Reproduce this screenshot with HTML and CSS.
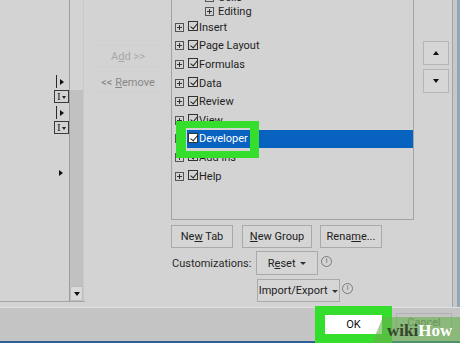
FILE: index.html
```html
<!DOCTYPE html>
<html lang="en">
<head>
    <meta charset="UTF-8">
    <meta name="viewport" content="width=device-width, initial-scale=1.0">
    <title>Customize the Ribbon</title>
    <link rel="stylesheet" href="styles.css">
</head>
<body>
    <div class="dialog">
        <div class="panes">
            <div class="cmd-list">
                <div class="cmd-tree">
                    <span class="tree-arrow lined"></span>
                    <span class="cmd-icon">I<i></i></span>
                    <span class="tree-arrow lined"></span>
                    <span class="cmd-icon">I<i></i></span>
                    <span class="tree-arrow lone"></span>
                </div>
                <div class="vscroll">
                    <div class="thumb"></div>
                    <div class="track"></div>
                    <div class="scroll-btn"><i class="tri-down"></i></div>
                </div>
            </div>

            <div class="add-remove">
                <button class="move-btn add">A<u>d</u>d &gt;&gt;</button>
                <button class="move-btn remove">&lt;&lt; <u>R</u>emove</button>
            </div>

            <div class="ribbon-col">
                <div class="tab-list">
                    <ul class="tabs">
                        <li class="row child short"><span class="plus"></span><span class="item">Cells</span></li>
                        <li class="row child short"><span class="plus"></span><span class="item">Editing</span></li>
                        <li class="row"><span class="plus"></span><span class="item"><span class="check"></span>Insert</span></li>
                        <li class="row"><span class="plus"></span><span class="item"><span class="check"></span>Page Layout</span></li>
                        <li class="row"><span class="plus"></span><span class="item"><span class="check"></span>Formulas</span></li>
                        <li class="row"><span class="plus"></span><span class="item"><span class="check"></span>Data</span></li>
                        <li class="row"><span class="plus"></span><span class="item"><span class="check"></span>Review</span></li>
                        <li class="row"><span class="plus"></span><span class="item"><span class="check"></span>View</span></li>
                        <li class="row selected"><span class="plus"></span><span class="item"><span class="check"></span>Developer</span></li>
                        <li class="row"><span class="plus"></span><span class="item"><span class="check"></span>Add-ins</span></li>
                        <li class="row"><span class="plus"></span><span class="item"><span class="check"></span>Help</span></li>
                    </ul>
                    <div class="callout dev-callout"></div>
                </div>

                <div class="tab-actions">
                    <button class="btn new-tab">Ne<u>w</u> Tab</button>
                    <button class="btn new-group"><u>N</u>ew Group</button>
                    <button class="btn rename">Rena<u>m</u>e...</button>
                </div>

                <div class="custom-row">
                    <span class="custom-label">Customizations:</span>
                    <button class="btn reset">R<u>e</u>set <i class="tri-down small"></i></button>
                    <span class="info">i</span>
                </div>

                <div class="import-row">
                    <button class="btn import">Import/Export <i class="tri-down small"></i></button>
                    <span class="info">i</span>
                </div>
            </div>

            <div class="move-col">
                <button class="arrow-btn"><i class="tri-up"></i></button>
                <button class="arrow-btn"><i class="tri-down"></i></button>
            </div>

            <div class="edge"></div>
        </div>

        <div class="footer">
            <button class="ok-btn">OK</button>
            <button class="cancel-btn">Cancel</button>
        </div>

        <div class="callout ok-callout"></div>
        <div class="watermark"><span class="wm-wiki">wiki</span><span class="wm-how">How</span></div>
    </div>
</body>
</html>
```

FILE: styles.css
```css
body {
    margin: 0;
    width: 460px;
    height: 343px;
    overflow: hidden;
    background-color: #d3d3d3;
    font-family: Roboto, "Noto Sans", sans-serif;
    font-size: 11px;
    color: #1f1f1f;
}

button {
    font-family: inherit;
    font-size: 11px;
    color: #222;
    padding: 0;
}

.dialog {
    position: relative;
    height: 343px;
    display: flex;
    flex-direction: column;
}

.panes {
    display: flex;
    height: 307px;
}

/* left command list */
.cmd-list {
    width: 85px;
    height: 302px;
    display: flex;
    border-bottom: 1px solid #a6a6a6;
    box-sizing: border-box;
}

.cmd-tree {
    width: 69px;
    display: flex;
    flex-direction: column;
    align-items: flex-start;
    padding-top: 75px;
    box-sizing: border-box;
}

.tree-arrow {
    position: relative;
}

.tree-arrow::after {
    content: "";
    position: absolute;
    border-left: 4px solid #111;
    border-top: 3px solid transparent;
    border-bottom: 3px solid transparent;
}

.tree-arrow.lined {
    margin-left: 56px;
    width: 8px;
    height: 13px;
    border-left: 1.5px solid #2a2a2a;
}

.tree-arrow.lined::after {
    left: 3px;
    top: 4px;
}

.tree-arrow.lone {
    margin: 33px 0 0 59px;
    height: 7px;
}

.tree-arrow.lone::after {
    left: 0;
    top: 0;
}

.cmd-icon {
    position: relative;
    margin: 2px 0 3px 54px;
    width: 15px;
    height: 13px;
    border: 1px solid #3a3a3a;
    border-left-width: 1.5px;
    box-sizing: border-box;
    font-family: "Liberation Serif", serif;
    font-size: 11px;
    line-height: 11px;
    padding-left: 2px;
}

.cmd-icon i {
    position: absolute;
    right: 2px;
    top: 5px;
    border-top: 3px solid #222;
    border-left: 2.5px solid transparent;
    border-right: 2.5px solid transparent;
}

.vscroll {
    width: 15px;
    display: flex;
    flex-direction: column;
    border-left: 1px solid #9d9d9d;
    border-right: 1px solid #c8c8c8;
    box-sizing: border-box;
}

.thumb {
    height: 90px;
    background-color: #d3d3d3;
}

.track {
    flex: 1;
    background-color: #c1c1c1;
}

.scroll-btn {
    height: 13px;
    background-color: #d9d9d9;
    border: 1px solid #bcbcbc;
    display: flex;
    align-items: center;
    justify-content: center;
}

.tri-down {
    border-top: 4px solid #111;
    border-left: 3.5px solid transparent;
    border-right: 3.5px solid transparent;
}

.tri-up {
    border-bottom: 4px solid #111;
    border-left: 3.5px solid transparent;
    border-right: 3.5px solid transparent;
}

.tri-down.small {
    display: inline-block;
    vertical-align: middle;
    margin-left: 2px;
    border-top-width: 3.5px;
    border-left-width: 3px;
    border-right-width: 3px;
    border-top-color: #333;
}

/* add / remove */
.add-remove {
    width: 86px;
    display: flex;
    flex-direction: column;
    align-items: center;
    padding-top: 45px;
    gap: 4px;
}

.move-btn {
    width: 68px;
    height: 22px;
    border: 1px solid #cfcfcf;
    border-left-color: #d1d1d1;
    border-right-color: #d1d1d1;
    background: transparent;
}

.move-btn.add {
    color: #a8a8a8;
}

.move-btn.remove {
    color: #878787;
}

/* ribbon tabs list */
.ribbon-col {
    width: 243px;
    display: flex;
    flex-direction: column;
}

.tab-list {
    position: relative;
    height: 220px;
    border: 1px solid #a3a3a3;
    border-top: none;
    box-sizing: border-box;
}

.tabs {
    list-style: none;
    margin: -10px 0 0;
    padding: 0;
}

.row {
    height: 18.6px;
    display: flex;
    align-items: center;
    padding-left: 3px;
}

.row.short {
    height: 14px;
}

.row.child {
    padding-left: 33px;
}

.plus {
    width: 9px;
    height: 9px;
    flex: none;
    border: 1px solid #555;
    box-sizing: border-box;
    margin-right: 3px;
    background:
        linear-gradient(#333, #333) center / 5px 1px no-repeat,
        linear-gradient(#333, #333) center / 1px 5px no-repeat;
}

.item {
    flex: 1;
    height: 100%;
    display: flex;
    align-items: center;
    padding-left: 1px;
}

.check {
    position: relative;
    top: -1px;
    width: 10px;
    height: 10px;
    flex: none;
    border: 1px solid #333;
    box-sizing: border-box;
    margin-right: 1px;
}

.check::after {
    content: "";
    position: absolute;
    left: 2.5px;
    top: 0;
    width: 3px;
    height: 6px;
    border: solid #222;
    border-width: 0 1px 1px 0;
    transform: rotate(40deg);
}

.row.selected .item {
    background-color: #0862bf;
    color: #fff;
}

.row.selected .check {
    background-color: #fff;
}

.callout {
    position: absolute;
    box-sizing: border-box;
    border: solid #35dd2c;
}

.dev-callout {
    left: 4px;
    top: 121px;
    width: 83px;
    height: 37px;
    border-width: 7px 9px 7px 10px;
}

.btn {
    height: 23px;
    border: 1px solid #a9a9a9;
    background-color: #d5d5d5;
}

.tab-actions {
    display: flex;
    gap: 9px;
    margin-top: 5px;
}

.new-tab {
    width: 62px;
}

.new-group {
    width: 70px;
}

.rename {
    width: 62px;
    margin-left: -1px;
}

.custom-row {
    display: flex;
    align-items: center;
    margin-top: 3px;
}

.custom-label {
    width: 84px;
    padding-left: 1px;
    color: #2a2a2a;
}

.reset {
    width: 62px;
    height: 24px;
}

.info {
    width: 9px;
    height: 9px;
    margin: -4px 0 0 3px;
    border: 1px solid #7a7a7a;
    border-radius: 50%;
    font-size: 7px;
    line-height: 9px;
    text-align: center;
    color: #666;
}

.import-row {
    display: flex;
    align-items: center;
    margin-top: 4px;
    padding-left: 86px;
}

.import {
    width: 83px;
}

.import-row .info {
    margin-left: 2px;
}

/* move up / down */
.move-col {
    width: 38px;
    display: flex;
    flex-direction: column;
    gap: 4px;
    padding: 41px 0 0 9px;
    box-sizing: border-box;
}

.arrow-btn {
    width: 26px;
    height: 24px;
    border: 1px solid #b5b5b5;
    background-color: #d6d6d6;
    display: flex;
    align-items: center;
    justify-content: center;
}

.edge {
    width: 8px;
    background-color: #c7c7c7;
    border-left: 1px solid #a4a4a4;
    border-right: 3px solid #93a4bb;
    box-sizing: border-box;
}

/* bottom buttons */
.footer {
    flex: 1;
    display: flex;
    justify-content: flex-end;
    gap: 14px;
    padding: 7px 8px 0 0;
    background-color: #c4c4c4;
    border-top: 1px solid #e0e0e0;
    border-bottom: 2px solid #2f5f96;
}

.ok-btn {
    width: 57px;
    height: 19px;
    border: none;
    background-color: #fff;
    color: #111;
}

.cancel-btn {
    width: 56px;
    height: 19px;
    margin-top: -2px;
    border: 1px solid #b0b0b0;
    background: transparent;
    color: #6d6d6d;
}

.ok-callout {
    left: 315px;
    top: 306px;
    width: 77px;
    height: 37px;
    border-width: 9px 10px;
}

.watermark {
    position: absolute;
    left: 372px;
    top: 317px;
    width: 88px;
    height: 26px;
    box-sizing: border-box;
    padding: 4px 0 0 15px;
    background-color: rgba(104, 176, 78, 0.62);
    clip-path: polygon(11px 0, 100% 0, 100% 100%, 0 100%);
    font-family: "Liberation Serif", serif;
    font-weight: bold;
    font-size: 17px;
    line-height: 20px;
}

.wm-wiki {
    color: #34472d;
}

.wm-how {
    color: #fff;
}
```
